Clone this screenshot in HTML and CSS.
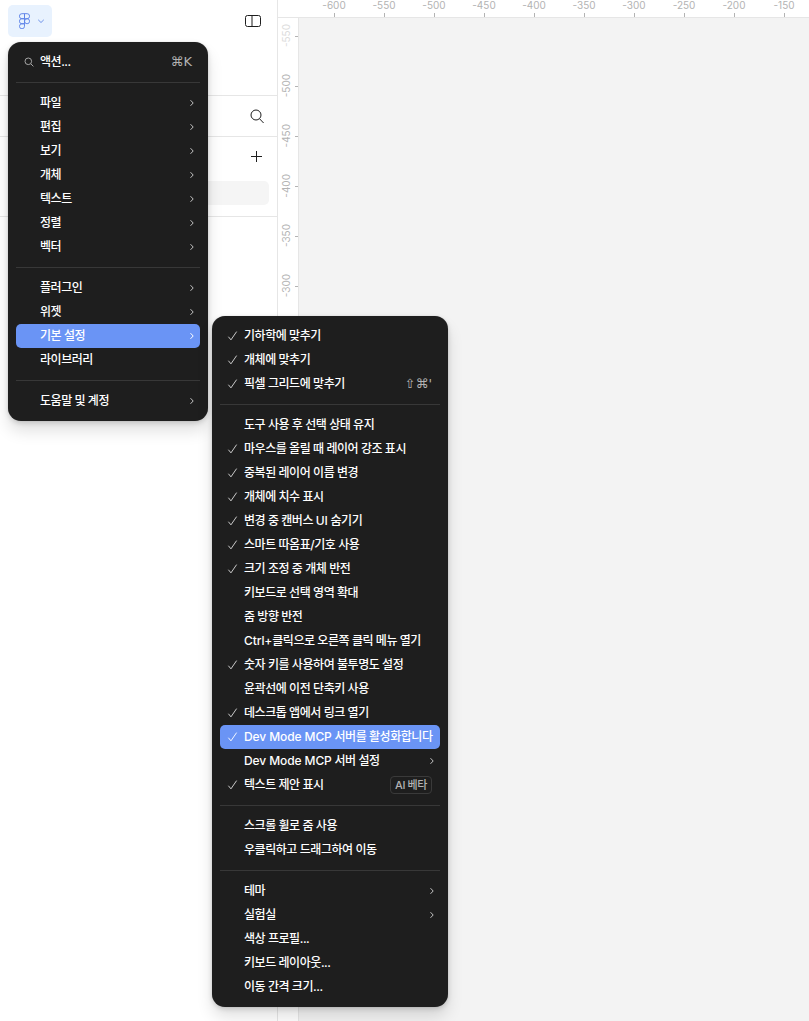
FILE: index.html
```html
<!DOCTYPE html>
<html lang="ko">
<head>
<meta charset="utf-8">
<title>Figma 메뉴</title>
<link rel="stylesheet" href="styles.css">
</head>
<body>
<svg class="defs" aria-hidden="true">
  <symbol id="chev" viewBox="0 0 8 8"><path d="M2.5 1.2 5.2 4 2.5 6.8" fill="none" stroke="currentColor" stroke-width="1"/></symbol>
  <symbol id="check" viewBox="0 0 12 12"><path d="M1.5 6.8 4.3 10.2 10.5 1.2" fill="none" stroke="currentColor" stroke-width="1"/></symbol>
</svg>
<div class="app">
  <aside class="panel">
    <header class="panel-head">
      <button class="logo-btn">
        <svg class="logo" viewBox="0 0 12 17"><g fill="none" stroke="currentColor"><path d="M6 .5H3.2a2.75 2.75 0 0 0 0 5.5H6z"/><path d="M6 .5h2.8a2.75 2.75 0 0 1 0 5.5H6z"/><path d="M6 6H3.2a2.75 2.75 0 0 0 0 5.5H6z"/><circle cx="8.8" cy="8.75" r="2.75"/><path d="M6 11.5H3.2A2.75 2.75 0 1 0 6 14.2z"/></g></svg>
        <svg class="logo-caret" viewBox="0 0 8 8"><path d="M1.2 2.8 4 5.5 6.8 2.8" fill="none" stroke="currentColor"/></svg>
      </button>
      <svg class="side-icon" viewBox="0 0 16 12"><g fill="none" stroke="#1e1e1e"><rect x=".5" y=".5" width="15" height="11" rx="2"/><path d="M7 .5v11"/></g></svg>
    </header>
    <div class="panel-search">
      <svg class="tool-icon" viewBox="0 0 14 15"><g fill="none" stroke="#1e1e1e"><circle cx="6" cy="6" r="5"/><path d="m9.6 9.8 4 4.2"/></g></svg>
    </div>
    <div class="panel-pages">
      <div class="pages-head">
        <svg class="plus-icon" viewBox="0 0 11 11"><path d="M5.5 0v11M0 5.5h11" fill="none" stroke="#1e1e1e"/></svg>
      </div>
      <div class="page-row"></div>
    </div>
  </aside>
  <main class="stage">
    <div class="ruler-top">
      <div class="rt"><span>-600</span><i></i></div>
      <div class="rt"><span>-550</span><i></i></div>
      <div class="rt"><span>-500</span><i></i></div>
      <div class="rt"><span>-450</span><i></i></div>
      <div class="rt"><span>-400</span><i></i></div>
      <div class="rt"><span>-350</span><i></i></div>
      <div class="rt"><span>-300</span><i></i></div>
      <div class="rt"><span>-250</span><i></i></div>
      <div class="rt"><span>-200</span><i></i></div>
      <div class="rt"><span>-150</span><i></i></div>
    </div>
    <div class="stage-body">
      <div class="ruler-left">
        <div class="rl faded"><span>-550</span><i></i></div>
        <div class="rl"><span>-500</span><i></i></div>
        <div class="rl"><span>-450</span><i></i></div>
        <div class="rl"><span>-400</span><i></i></div>
        <div class="rl"><span>-350</span><i></i></div>
        <div class="rl"><span>-300</span><i></i></div>
      </div>
      <div class="canvas"></div>
    </div>
  </main>
</div>

<nav class="menu menu-main">
  <div class="row"><span class="slot"><svg class="mini-search" viewBox="0 0 10 10"><g fill="none" stroke="currentColor"><circle cx="4.3" cy="4.3" r="3.3"/><path d="m6.8 6.8 2.6 2.6"/></g></svg></span><span class="label">액션...</span><span class="keys">⌘K</span></div>
  <hr class="sep">
  <div class="row"><span class="slot"></span><span class="label">파일</span><svg class="chev"><use href="#chev"/></svg></div>
  <div class="row"><span class="slot"></span><span class="label">편집</span><svg class="chev"><use href="#chev"/></svg></div>
  <div class="row"><span class="slot"></span><span class="label">보기</span><svg class="chev"><use href="#chev"/></svg></div>
  <div class="row"><span class="slot"></span><span class="label">개체</span><svg class="chev"><use href="#chev"/></svg></div>
  <div class="row"><span class="slot"></span><span class="label">텍스트</span><svg class="chev"><use href="#chev"/></svg></div>
  <div class="row"><span class="slot"></span><span class="label">정렬</span><svg class="chev"><use href="#chev"/></svg></div>
  <div class="row"><span class="slot"></span><span class="label">벡터</span><svg class="chev"><use href="#chev"/></svg></div>
  <hr class="sep">
  <div class="row"><span class="slot"></span><span class="label">플러그인</span><svg class="chev"><use href="#chev"/></svg></div>
  <div class="row"><span class="slot"></span><span class="label">위젯</span><svg class="chev"><use href="#chev"/></svg></div>
  <div class="row active"><span class="slot"></span><span class="label">기본 설정</span><svg class="chev"><use href="#chev"/></svg></div>
  <div class="row"><span class="slot"></span><span class="label">라이브러리</span></div>
  <hr class="sep">
  <div class="row"><span class="slot"></span><span class="label">도움말 및 계정</span><svg class="chev"><use href="#chev"/></svg></div>
</nav>

<nav class="menu menu-sub">
  <div class="row"><span class="slot"><svg class="check"><use href="#check"/></svg></span><span class="label">기하학에 맞추기</span></div>
  <div class="row"><span class="slot"><svg class="check"><use href="#check"/></svg></span><span class="label">개체에 맞추기</span></div>
  <div class="row"><span class="slot"><svg class="check"><use href="#check"/></svg></span><span class="label">픽셀 그리드에 맞추기</span><span class="keys">⇧⌘'</span></div>
  <hr class="sep">
  <div class="row"><span class="slot"></span><span class="label">도구 사용 후 선택 상태 유지</span></div>
  <div class="row"><span class="slot"><svg class="check"><use href="#check"/></svg></span><span class="label">마우스를 올릴 때 레이어 강조 표시</span></div>
  <div class="row"><span class="slot"><svg class="check"><use href="#check"/></svg></span><span class="label">중복된 레이어 이름 변경</span></div>
  <div class="row"><span class="slot"><svg class="check"><use href="#check"/></svg></span><span class="label">개체에 치수 표시</span></div>
  <div class="row"><span class="slot"><svg class="check"><use href="#check"/></svg></span><span class="label">변경 중 캔버스 <span class="latin">UI</span> 숨기기</span></div>
  <div class="row"><span class="slot"><svg class="check"><use href="#check"/></svg></span><span class="label">스마트 따옴표/기호 사용</span></div>
  <div class="row"><span class="slot"><svg class="check"><use href="#check"/></svg></span><span class="label">크기 조정 중 개체 반전</span></div>
  <div class="row"><span class="slot"></span><span class="label">키보드로 선택 영역 확대</span></div>
  <div class="row"><span class="slot"></span><span class="label">줌 방향 반전</span></div>
  <div class="row"><span class="slot"></span><span class="label"><span class="latin">Ctrl+</span>클릭으로 오른쪽 클릭 메뉴 열기</span></div>
  <div class="row"><span class="slot"><svg class="check"><use href="#check"/></svg></span><span class="label">숫자 키를 사용하여 불투명도 설정</span></div>
  <div class="row"><span class="slot"></span><span class="label">윤곽선에 이전 단축키 사용</span></div>
  <div class="row"><span class="slot"><svg class="check"><use href="#check"/></svg></span><span class="label">데스크톱 앱에서 링크 열기</span></div>
  <div class="row active"><span class="slot"><svg class="check"><use href="#check"/></svg></span><span class="label"><span class="latin">Dev Mode MCP</span> 서버를 활성화합니다</span></div>
  <div class="row"><span class="slot"></span><span class="label"><span class="latin">Dev Mode MCP</span> 서버 설정</span><svg class="chev"><use href="#chev"/></svg></div>
  <div class="row"><span class="slot"><svg class="check"><use href="#check"/></svg></span><span class="label">텍스트 제안 표시</span><span class="badge">AI 베타</span></div>
  <hr class="sep">
  <div class="row"><span class="slot"></span><span class="label">스크롤 휠로 줌 사용</span></div>
  <div class="row"><span class="slot"></span><span class="label">우클릭하고 드래그하여 이동</span></div>
  <hr class="sep">
  <div class="row"><span class="slot"></span><span class="label">테마</span><svg class="chev"><use href="#chev"/></svg></div>
  <div class="row"><span class="slot"></span><span class="label">실험실</span><svg class="chev"><use href="#chev"/></svg></div>
  <div class="row"><span class="slot"></span><span class="label">색상 프로필...</span></div>
  <div class="row"><span class="slot"></span><span class="label">키보드 레이아웃...</span></div>
  <div class="row"><span class="slot"></span><span class="label">이동 간격 크기...</span></div>
</nav>
</body>
</html>
```
FILE: styles.css
```css
* { box-sizing: border-box; }
html, body { margin: 0; height: 1021px; overflow: hidden; background: #fff; }
body { font-family: Inter, "Noto Sans CJK KR", sans-serif; font-size: 12px; color: #1e1e1e; position: relative; }
.defs { width: 0; height: 0; position: absolute; }

.app { display: flex; height: 1021px; }

.panel { width: 278px; flex: none; border-right: 1px solid #e6e6e6; background: #fff; }
.panel-head { height: 96px; border-bottom: 1px solid #e6e6e6; padding: 5px 16px 0 8px; display: flex; justify-content: space-between; align-items: flex-start; }
.logo-btn { width: 44px; height: 32px; border: 0; padding: 0 0 0 11px; border-radius: 5px; background: #e8f2fe; color: #5b81e8; display: flex; align-items: center; gap: 7px; }
.logo { width: 11px; height: 16px; }
.logo-caret { width: 8px; height: 8px; color: #6f93ea; }
.side-icon { width: 16px; height: 12px; margin-top: 10px; }
.panel-search { height: 41px; border-bottom: 1px solid #e6e6e6; padding-right: 13px; display: flex; justify-content: flex-end; align-items: center; }
.tool-icon { width: 14px; height: 15px; }
.panel-pages { height: 80px; border-bottom: 1px solid #e6e6e6; padding: 4px 8px 0; }
.pages-head { height: 31px; margin-bottom: 9px; padding-right: 7px; display: flex; justify-content: flex-end; align-items: center; }
.plus-icon { width: 11px; height: 11px; }
.page-row { height: 24px; border-radius: 5px; background: #f5f5f5; }

.stage { flex: 1; display: flex; flex-direction: column; min-width: 0; }
.ruler-top { height: 18px; flex: none; border-bottom: 1px solid #e6e6e6; padding-left: 31px; display: flex; overflow: hidden; }
.rt { width: 50px; flex: none; display: flex; flex-direction: column; align-items: center; justify-content: space-between; }
.rt span { font-size: 10px; line-height: 10px; color: #b3b3b3; }
.rt i { width: 1px; height: 4px; background: #b3b3b3; }
.stage-body { flex: 1; display: flex; min-height: 0; }
.ruler-left { width: 21px; flex: none; border-right: 1px solid #e6e6e6; overflow: hidden; display: flex; flex-direction: column; }
.rl { height: 50px; flex: none; display: flex; justify-content: flex-end; align-items: center; gap: 3px; }
.rl:first-child { margin-top: -7px; }
.rl span { writing-mode: vertical-rl; transform: rotate(180deg); font-size: 10px; line-height: 12px; color: #b3b3b3; }
.rl i { width: 3px; height: 1px; background: #b3b3b3; }
.rl.faded span { color: #dcdcdc; }
.canvas { flex: 1; background: #f3f3f3; }

.menu { position: absolute; background: #1e1e1e; border-radius: 13px; padding: 8px; color: #fff; box-shadow: 0 2px 5px rgba(0,0,0,.15), 0 10px 16px rgba(0,0,0,.12), 0 0 1px rgba(0,0,0,.2); }
.menu-main { left: 8px; top: 42px; width: 200px; }
.menu-sub { left: 212px; top: 316px; width: 236px; }
.row { height: 24px; display: flex; align-items: center; border-radius: 5px; padding-right: 8px; }
.row.active { background: #6a94f5; }
.slot { width: 24px; flex: none; display: flex; align-items: center; justify-content: flex-start; padding-left: 7px; }
.label { flex: 1; font-weight: 500; line-height: 22px; letter-spacing: -.45px; white-space: nowrap; }
.latin { letter-spacing: -.1px; }
.keys { font-family: "DejaVu Sans", sans-serif; font-size: 13px; line-height: 16px; color: #b3b3b3; margin-top: -1px; }
.chev { width: 8px; height: 8px; color: #c4c4c4; margin-right: -4px; flex: none; }
.row.active .chev { color: #fff; }
.check { width: 11px; height: 12px; color: #d9d9d9; flex: none; }
.row.active .check { color: #fff; }
.mini-search { width: 10px; height: 10px; color: #a6a6a6; margin-left: 1px; }
.badge { border: 1px solid #3a3a3a; border-radius: 4px; height: 18px; padding: 0 4px; font-size: 11px; font-weight: 500; line-height: 16px; color: #b3b3b3; letter-spacing: -.4px; }
.sep { border: 0; height: 1px; margin: 8px 0; background: #383838; }
```
